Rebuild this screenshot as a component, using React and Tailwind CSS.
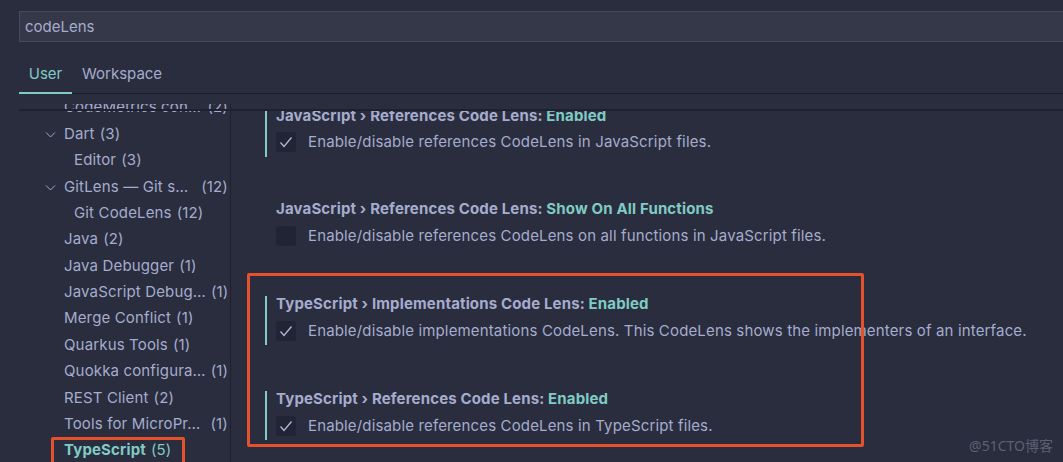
import React from 'react';

const tree = [
  { label: 'CodeMetrics con…', count: '(2)', level: 1, split: true },
  { label: 'Dart', count: '(3)', level: 1, chevron: true },
  { label: 'Editor', count: '(3)', level: 2 },
  { label: 'GitLens — Git s…', count: '(12)', level: 1, chevron: true, split: true },
  { label: 'Git CodeLens', count: '(12)', level: 2 },
  { label: 'Java', count: '(2)', level: 1 },
  { label: 'Java Debugger', count: '(1)', level: 1 },
  { label: 'JavaScript Debug…', count: '(1)', level: 1, split: true },
  { label: 'Merge Conflict', count: '(1)', level: 1 },
  { label: 'Quarkus Tools', count: '(1)', level: 1 },
  { label: 'Quokka configura…', count: '(1)', level: 1, split: true },
  { label: 'REST Client', count: '(2)', level: 1 },
  { label: 'Tools for MicroPr…', count: '(1)', level: 1, split: true },
  { label: 'TypeScript', count: '(5)', level: 1, active: true },
];

const settings = [
  {
    category: 'JavaScript › References Code Lens: ',
    name: 'Enabled',
    desc: 'Enable/disable references CodeLens in JavaScript files.',
    checked: true,
    modified: true,
    h: 'h-[93px]',
  },
  {
    category: 'JavaScript › References Code Lens: ',
    name: 'Show On All Functions',
    desc: 'Enable/disable references CodeLens on all functions in JavaScript files.',
    checked: false,
    modified: false,
    h: 'h-[95px]',
  },
  {
    category: 'TypeScript › Implementations Code Lens: ',
    name: 'Enabled',
    desc: 'Enable/disable implementations CodeLens. This CodeLens shows the implementers of an interface.',
    checked: true,
    modified: true,
    h: 'h-[95px]',
  },
  {
    category: 'TypeScript › References Code Lens: ',
    name: 'Enabled',
    desc: 'Enable/disable references CodeLens in TypeScript files.',
    checked: true,
    modified: true,
    h: 'h-[95px]',
  },
];

const Chevron = () => (
  <svg width="13" height="13" viewBox="0 0 16 16" fill="none" stroke="#a6accd" strokeWidth="1.2">
    <polyline points="2.5,5.5 8,11 13.5,5.5" />
  </svg>
);

const TreeRow = ({ item }) => (
  <div
    className={`h-[26.4px] flex items-center pr-[2px] ${item.level === 2 ? 'pl-[55px]' : 'pl-[45px]'} relative`}
  >
    {item.chevron && (
      <span className="absolute left-[25px] top-[7px]">
        <Chevron />
      </span>
    )}
    <div className={`flex items-center whitespace-nowrap ${item.split ? 'w-full justify-between' : ''}`}>
      <span className={item.active ? 'font-bold text-[#80cbc4]' : ''}>{item.label}</span>
      <span className={item.active ? 'ml-[5px] text-[#80cbc4]' : 'ml-[5px]'}>{item.count}</span>
    </div>
  </div>
);

const Checkbox = ({ checked }) => (
  <div className="w-[20px] h-[20px] rounded-[3px] bg-[#222435] flex items-center justify-center shrink-0">
    {checked && (
      <svg width="16" height="16" viewBox="0 0 16 16" fill="none" stroke="#b4b9d8" strokeWidth="1.3">
        <polyline points="2.5,8.5 6,12.5 13.5,3.5" />
      </svg>
    )}
  </div>
);

const SettingItem = ({ s, first }) => (
  <div className={`${s.h} pl-[34px]`}>
    <div className={`h-[49px] pl-[9px] border-l-2 ${s.modified ? 'border-[#80cbc4]' : 'border-transparent'}`}>
      <div className="h-[16px] leading-[16px] font-bold whitespace-nowrap">
        <span className="text-[#a6accd]">{s.category}</span>
        <span className="text-[#80cbc4]">{s.name}</span>
      </div>
      <div className={`${first ? 'mt-[8px]' : 'mt-[9px]'} h-[20px] flex items-center gap-[12px] whitespace-nowrap`}>
        <Checkbox checked={s.checked} />
        <span>{s.desc}</span>
      </div>
    </div>
  </div>
);

export default function App() {
  return (
    <div
      className="w-[1063px] h-[462px] bg-[#292d3e] overflow-hidden relative text-[#a6accd] text-[15px] tracking-[0.15px]"
      style={{ fontFamily: 'Inter, "Noto Sans", sans-serif' }}
    >
      <div className="pl-[19px] pt-[11px]">
        <div className="h-[31px] bg-[#353849] border border-[#47495d] border-r-0 flex items-center pl-[5px] pt-[2px] tracking-normal">
          codeLens
        </div>
        <div className="mt-[10px] h-[42px] flex border-b border-[#1b1d2a] tracking-normal">
          <div className="w-[53px] flex items-center justify-center pt-[3px] text-[#80cbc4] relative">
            User
            <div className="absolute left-0 right-0 bottom-[-1px] h-[2px] bg-[#80cbc4]" />
          </div>
          <div className="px-[10px] pt-[3px] flex items-center">Workspace</div>
        </div>
      </div>

      <div className="flex pl-[19px]">
        <div className="w-[212px] h-[358px] mt-[10px] border-r border-[#1e2030] overflow-hidden">
          <div className="mt-[-9.6px]">
            {tree.map((item) => (
              <TreeRow key={item.label} item={item} />
            ))}
          </div>
        </div>
        <div className="flex-1 h-[352px] mt-[16px] overflow-hidden">
          <div className="mt-[-2px]">
            {settings.map((s, i) => (
              <SettingItem key={i} s={s} first={i === 0} />
            ))}
          </div>
        </div>
      </div>

      {/* scroll shadow */}
      <div className="absolute left-[19px] right-0 top-[109px] h-[2px] bg-[#1f2130]" />

      {/* annotation boxes */}
      <div className="absolute left-[247px] top-[273px] w-[617px] h-[174px] border-[3px] border-[#e4512b] rounded-[2px]" />
      <div className="absolute left-[51px] top-[437px] w-[134px] h-[32px] border-[3px] border-[#e4512b] rounded-[2px]" />

      <div
        className="absolute right-[10px] bottom-[6px] text-[14px] tracking-normal text-[#5d6072]"
        style={{ fontFamily: '"Noto Sans", "Noto Sans CJK SC", sans-serif' }}
      >
        @51CTO博客
      </div>
    </div>
  );
}
